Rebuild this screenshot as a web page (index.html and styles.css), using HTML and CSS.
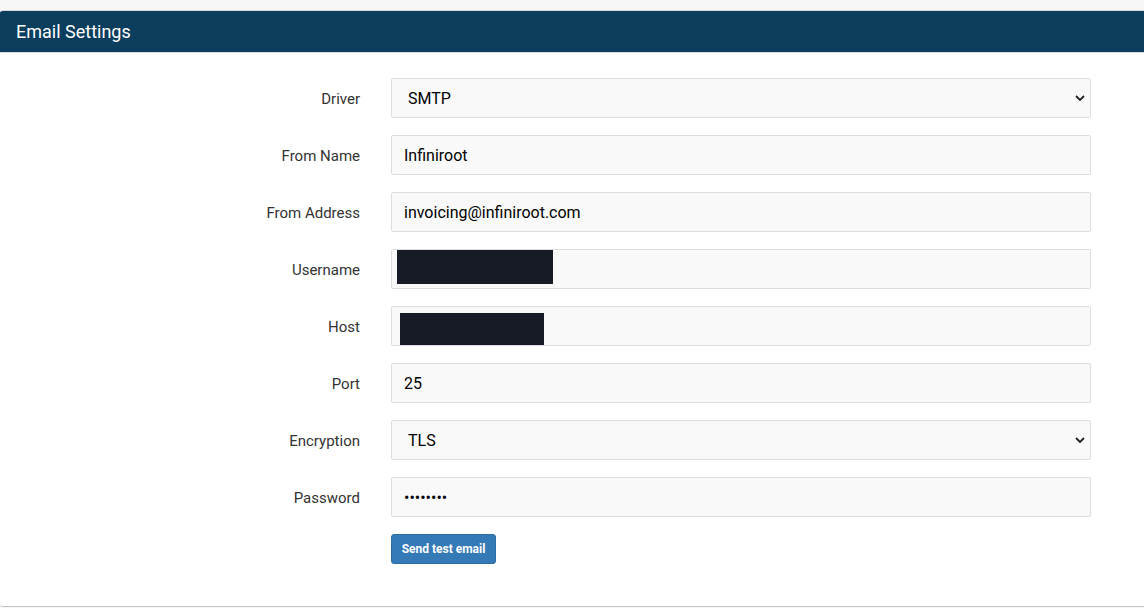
FILE: index.html
```html
<!DOCTYPE html>
<html>
<head>
<meta charset="utf-8">
<link rel="stylesheet" href="styles.css">
</head>
<body>
<div class="panel">
  <div class="panel-heading">Email Settings</div>
  <div class="panel-body">
    <div class="row">
      <label class="label">Driver</label>
      <select class="control select"><option>SMTP</option></select>
    </div>
    <div class="row">
      <label class="label">From Name</label>
      <input class="control" type="text" value="Infiniroot">
    </div>
    <div class="row">
      <label class="label">From Address</label>
      <input class="control" type="text" value="invoicing@infiniroot.com">
    </div>
    <div class="row">
      <label class="label">Username</label>
      <div class="wrap">
        <input class="control full" type="text" value="">
        <span class="redact redact-user"></span>
      </div>
    </div>
    <div class="row">
      <label class="label">Host</label>
      <div class="wrap">
        <input class="control full" type="text" value="">
        <span class="redact redact-host"></span>
      </div>
    </div>
    <div class="row">
      <label class="label">Port</label>
      <input class="control" type="text" value="25">
    </div>
    <div class="row">
      <label class="label">Encryption</label>
      <select class="control select"><option>TLS</option></select>
    </div>
    <div class="row">
      <label class="label">Password</label>
      <input class="control" type="password" value="xxxxxxxx">
    </div>
    <div class="row">
      <span class="label"></span>
      <button class="btn" type="button">Send test email</button>
    </div>
  </div>
</div>
</body>
</html>
```
FILE: styles.css
```css
html, body {
  margin: 0;
  padding: 0;
}
body {
  background: #f7f7f7;
  font-family: Roboto, "Liberation Sans", Arial, sans-serif;
  overflow: hidden;
  width: 1144px;
  height: 608px;
}
.panel {
  margin-top: 10px;
  width: 1160px;
  background: #fff;
  border-top: 1px solid #d8d8d8;
  border-bottom: 1px solid #c4c4c4;
  border-radius: 3px;
  box-sizing: border-box;
  overflow: hidden;
}
.panel-heading {
  height: 41px;
  background: #0b3d5c;
  color: #fff;
  font-size: 18px;
  display: flex;
  align-items: center;
  padding-left: 16px;
  border-bottom: 1px solid #dcdcdc;
}
.panel-body {
  padding: 25px 0 42px 0;
  display: flex;
  flex-direction: column;
  gap: 17px;
}
.row {
  display: flex;
  align-items: center;
  gap: 31px;
}
.label {
  width: 360px;
  flex: none;
  text-align: right;
  font-size: 15px;
  color: #333;
  padding-top: 2px;
}
.control {
  width: 700px;
  height: 40px;
  box-sizing: border-box;
  border: 1px solid #dddddd;
  border-radius: 2px;
  background: #f9f9f9;
  font-family: Roboto, "Liberation Sans", Arial, sans-serif;
  font-size: 16px;
  color: #000;
  padding: 0 12px;
  margin: 0;
  outline: none;
}
.select {
  -webkit-appearance: none;
  appearance: none;
  padding-left: 16px;
  background-image: url("data:image/svg+xml,%3Csvg xmlns='http://www.w3.org/2000/svg' width='10' height='6' viewBox='0 0 10 6'%3E%3Cpath d='M1 1l4 4 4-4' fill='none' stroke='%23222' stroke-width='1.8'/%3E%3C/svg%3E");
  background-repeat: no-repeat;
  background-position: right 5px center;
}
.wrap {
  position: relative;
  width: 700px;
  height: 40px;
}
.full {
  width: 100%;
}
.redact {
  position: absolute;
  background: #161b26;
}
.redact-user {
  left: 6px;
  top: 1px;
  width: 156px;
  height: 34px;
}
.redact-host {
  left: 9px;
  top: 7px;
  width: 144px;
  height: 32px;
}
.btn {
  width: 105px;
  height: 30px;
  background: #337ab7;
  border: 1px solid #2e6da4;
  border-radius: 3px;
  color: #fff;
  font-family: Roboto, "Liberation Sans", Arial, sans-serif;
  font-weight: bold;
  font-size: 12px;
  padding: 0;
}
```
